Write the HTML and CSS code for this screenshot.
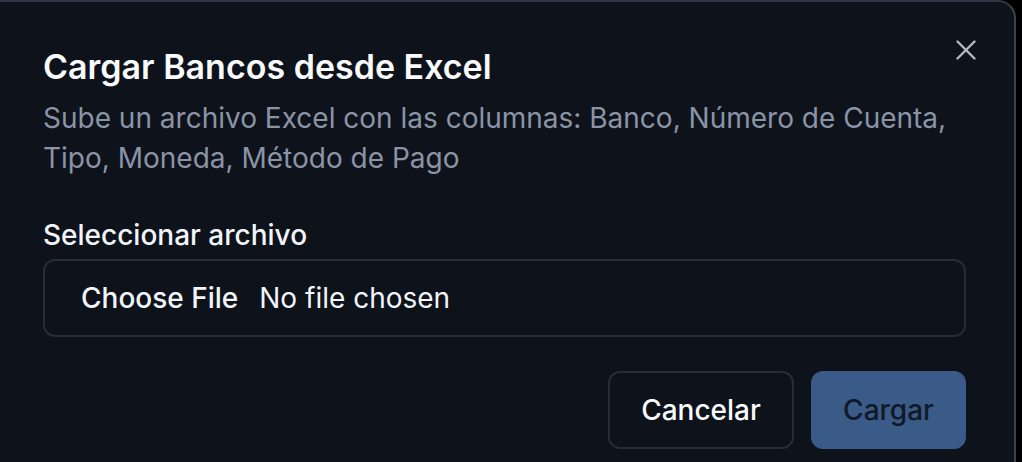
FILE: index.html
```html
<!DOCTYPE html>
<html lang="es">
<head>
<meta charset="utf-8">
<title>Cargar Bancos desde Excel</title>
<link rel="stylesheet" href="styles.css">
</head>
<body>
<div class="dialog">
  <button class="close" aria-label="Cerrar">
    <svg width="20" height="20" viewBox="0 0 20 20" fill="none" stroke="currentColor" stroke-width="2.4" stroke-linecap="round"><path d="M1.5 1.5 18.5 18.5"/><path d="M18.5 1.5 1.5 18.5"/></svg>
  </button>
  <div class="header">
    <h2 class="title">Cargar Bancos desde Excel</h2>
    <p class="desc">Sube un archivo Excel con las columnas: Banco, Número de Cuenta, Tipo, Moneda, Método de Pago</p>
  </div>
  <div class="field">
    <label class="label">Seleccionar archivo</label>
    <div class="file">
      <span class="file-btn">Choose File</span>
      <span class="file-name">No file chosen</span>
    </div>
  </div>
  <div class="footer">
    <button class="btn btn-outline">Cancelar</button>
    <button class="btn btn-primary">Cargar</button>
  </div>
</div>
</body>
</html>
```

FILE: styles.css
```css
* { box-sizing: border-box; }
html, body {
  margin: 0;
  padding: 0;
  background: #000;
  height: 100%;
  overflow: hidden;
}
body {
  font-family: Inter, "Noto Sans", sans-serif;
  color: #f8fafc;
}
.dialog {
  position: relative;
  width: 1016px;
  height: 470px;
  background: #0e121a;
  border-top: 2px solid #2f3544;
  border-right: 2px solid #3a4151;
  border-top-right-radius: 18px;
  padding: 45px 48px 0 43px;
  display: flex;
  flex-direction: column;
}
.close {
  position: absolute;
  top: 38px;
  right: 38px;
  background: none;
  border: 0;
  padding: 0;
  color: #b4b8c0;
  display: flex;
}
.header { display: flex; flex-direction: column; gap: 11px; }
.title {
  margin: 0;
  font-size: 34px;
  line-height: 40px;
  font-weight: 600;
  color: #f8fafc;
}
.desc {
  margin: 0;
  font-size: 28px;
  line-height: 40px;
  color: #8a94a7;
}
.field { margin-top: 43px; display: flex; flex-direction: column; gap: 10px; }
.label {
  font-size: 28px;
  line-height: 28px;
  font-weight: 500;
  color: #f1f5f9;
}
.file {
  height: 78px;
  flex: none;
  border: 2px solid #262c38;
  border-radius: 12px;
  display: flex;
  align-items: center;
  padding-left: 36px;
  font-size: 28px;
  color: #f1f5f9;
}
.file-btn { font-weight: 500; margin-right: 21px; }
.footer {
  margin-top: 34px;
  display: flex;
  justify-content: flex-end;
  gap: 17px;
}
.btn {
  height: 78px;
  flex: none;
  border-radius: 12px;
  font-family: inherit;
  font-size: 28px;
  font-weight: 500;
  padding: 0;
}
.btn-outline {
  background: #0e121a;
  border: 2px solid #262c38;
  color: #f8fafc;
  width: 186px;
}
.btn-primary {
  background: #3a5a88;
  border: 0;
  color: #111827;
  width: 155px;
}
```
